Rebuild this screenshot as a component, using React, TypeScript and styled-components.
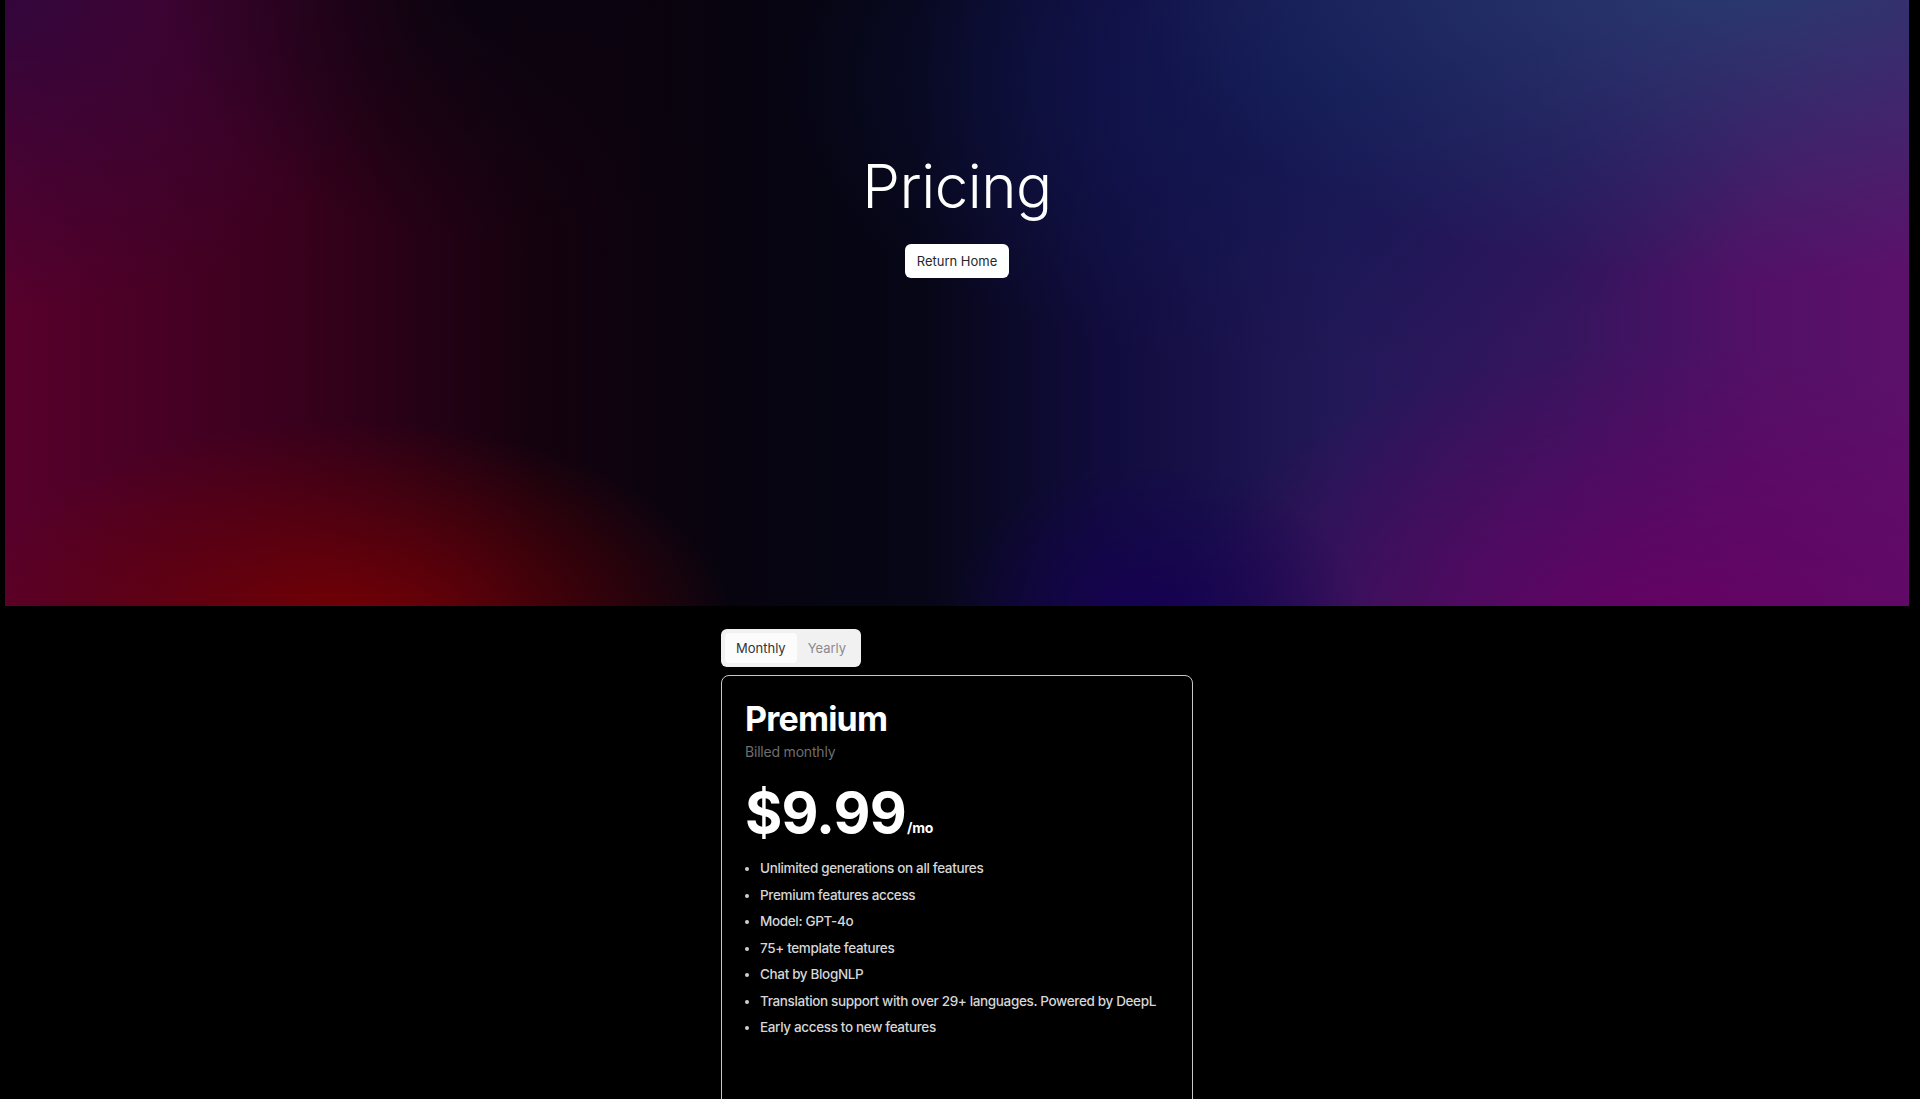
import React, { useState } from "react";
import styled, { createGlobalStyle } from "styled-components";

const Global = createGlobalStyle`
  html, body { margin: 0; padding: 0; background: #000; }
  body { font-family: Inter, "Noto Sans", sans-serif; color: #fff; }
  * { box-sizing: border-box; }
`;

const Page = styled.div`
  min-height: 1200px;
  background: #000;
  padding: 0 11px 0 5px;
`;

const Hero = styled.header`
  height: 606px;
  display: flex;
  flex-direction: column;
  align-items: center;
  padding-top: 150px;
  background:
    radial-gradient(ellipse 260px 200px at 1150px 620px, rgba(22, 0, 82, 1), transparent 80%),
    radial-gradient(ellipse 520px 280px at 340px 630px, rgba(118, 0, 4, 1), transparent 75%),
    radial-gradient(ellipse 900px 460px at 1750px -40px, rgba(35, 62, 112, 0.95), transparent 70%),
    radial-gradient(ellipse 700px 380px at 1300px 80px, rgba(16, 24, 82, 0.85), transparent 75%),
    radial-gradient(ellipse 420px 320px at 480px 0px, rgba(8, 4, 16, 0.85), transparent 75%),
    radial-gradient(ellipse 520px 420px at 0px 0px, rgba(48, 6, 60, 0.95), transparent 75%),
    radial-gradient(ellipse 650px 400px at 1650px 640px, rgba(105, 0, 100, 0.95), transparent 75%),
    linear-gradient(90deg,
      #58002c 0%,
      #3c001e 14%,
      #14020e 28%,
      #07040f 38%,
      #060616 48%,
      #110c3e 58%,
      #221858 70%,
      #36155f 82%,
      #521066 92%,
      #5c106a 100%);
`;

const Title = styled.h1`
  margin: 0;
  font-size: 60px;
  font-weight: 300;
  line-height: 72px;
  letter-spacing: -0.5px;
  color: #fff;
`;

const HomeButton = styled.button`
  margin-top: 22px;
  height: 34px;
  padding: 0 12px;
  border: none;
  border-radius: 6px;
  background: #fff;
  color: #27272a;
  font-family: inherit;
  font-size: 13px;
  font-weight: 400;
  cursor: pointer;
`;

const Main = styled.main`
  display: flex;
  justify-content: center;
  padding-top: 23px;
`;

const Column = styled.div`
  width: 472px;
  display: flex;
  flex-direction: column;
  align-items: flex-start;
  gap: 8px;
`;

const TabList = styled.div`
  display: flex;
  height: 38px;
  padding: 4px;
  border-radius: 6px;
  background: #f1f1f2;
`;

const Tab = styled.button<{ $active: boolean }>`
  border: none;
  border-radius: 4px;
  padding: 0 11px;
  font-family: inherit;
  font-size: 13px;
  font-weight: 400;
  background: ${(p) => (p.$active ? "#fcfcfc" : "transparent")};
  color: ${(p) => (p.$active ? "#333338" : "#8a8a90")};
  cursor: pointer;
`;

const Card = styled.section`
  width: 100%;
  min-height: 520px;
  border: 1px solid #c8c8c8;
  border-radius: 8px;
  padding: 22px 23px;
`;

const PlanName = styled.h2`
  margin: 0;
  font-size: 34px;
  font-weight: 700;
  line-height: 42px;
  letter-spacing: -0.8px;
`;

const Billed = styled.p`
  margin: 3px 0 0;
  font-size: 14px;
  color: #6e6e6e;
  letter-spacing: -0.2px;
`;

const PriceRow = styled.div`
  display: flex;
  align-items: baseline;
  margin-top: 17px;
`;

const Price = styled.span`
  font-size: 57px;
  font-weight: 700;
  line-height: 72px;
  letter-spacing: -0.8px;
`;

const Per = styled.span`
  font-size: 14px;
  font-weight: 700;
  letter-spacing: -0.3px;
  margin-left: 1px;
`;

const Features = styled.ul`
  margin: 6px 0 0;
  padding-left: 15px;
  list-style: disc;
`;

const Feature = styled.li`
  font-size: 13.5px;
  line-height: 26.5px;
  font-weight: 500;
  color: #d6d6d6;
  letter-spacing: -0.35px;
  &::marker { color: #cfcfcf; }
`;

const features = [
  "Unlimited generations on all features",
  "Premium features access",
  "Model: GPT-4o",
  "75+ template features",
  "Chat by BlogNLP",
  "Translation support with over 29+ languages. Powered by DeepL",
  "Early access to new features",
];

export default function App() {
  const [period, setPeriod] = useState<"monthly" | "yearly">("monthly");
  return (
    <Page>
      <Global />
      <Hero>
        <Title>Pricing</Title>
        <HomeButton>Return Home</HomeButton>
      </Hero>
      <Main>
        <Column>
          <TabList>
            <Tab $active={period === "monthly"} onClick={() => setPeriod("monthly")}>Monthly</Tab>
            <Tab $active={period === "yearly"} onClick={() => setPeriod("yearly")}>Yearly</Tab>
          </TabList>
          <Card>
            <PlanName>Premium</PlanName>
            <Billed>Billed monthly</Billed>
            <PriceRow>
              <Price>$9.99</Price>
              <Per>/mo</Per>
            </PriceRow>
            <Features>
              {features.map((f) => (
                <Feature key={f}>{f}</Feature>
              ))}
            </Features>
          </Card>
        </Column>
      </Main>
    </Page>
  );
}
